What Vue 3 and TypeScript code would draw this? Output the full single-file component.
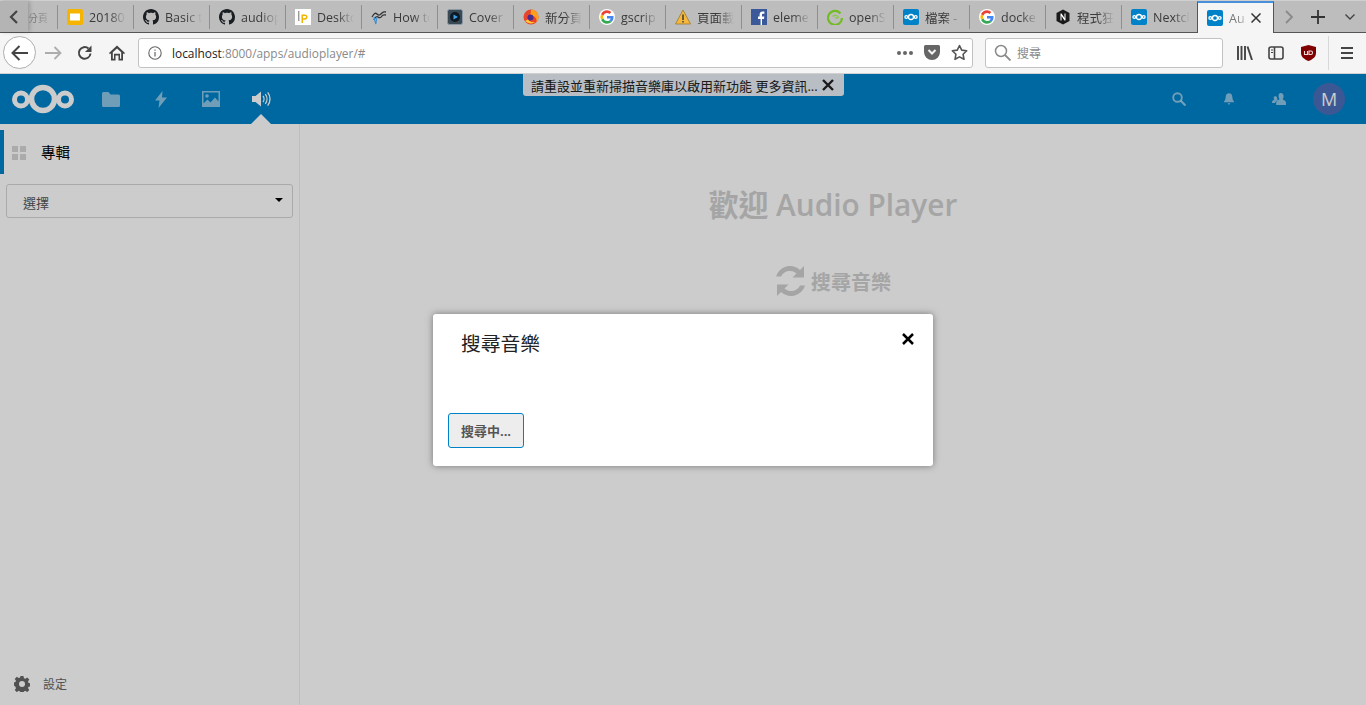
<script setup lang="ts">
interface Tab { icon: string; label: string }
const tabs: Tab[] = [
  { icon: 'slides', label: '20180' },
  { icon: 'github', label: 'Basic t' },
  { icon: 'github', label: 'audiop' },
  { icon: 'lp', label: 'Deskto' },
  { icon: 'wave', label: 'How to' },
  { icon: 'cover', label: 'Cover' },
  { icon: 'firefox', label: '新分頁' },
  { icon: 'google', label: 'gscrip' },
  { icon: 'warn', label: '頁面載' },
  { icon: 'fb', label: 'eleme' },
  { icon: 'suse', label: 'openS' },
  { icon: 'nc', label: '檔案 -' },
  { icon: 'google', label: 'docke' },
  { icon: 'n', label: '程式狂' },
  { icon: 'nc', label: 'Nextcl' },
]
</script>

<template>
  <div class="window">
    <div class="tabstrip">
      <div class="scroll-left">
        <svg width="12" height="16" viewBox="0 0 12 16"><path d="M9 2 3 8l6 6" fill="none" stroke="#444" stroke-width="2.2" /></svg>
      </div>
      <div class="first-tab"><span class="first-label">分頁</span></div>
      <div v-for="(t, i) in tabs" :key="i" class="tab">
        <svg class="fav" width="16" height="16" viewBox="0 0 16 16">
          <template v-if="t.icon === 'slides'">
            <rect width="16" height="16" rx="2" fill="#f4b400" /><rect x="3" y="4.5" width="10" height="7" fill="#fff" />
          </template>
          <template v-else-if="t.icon === 'github'">
            <path fill="#1b1f23" d="M8 0C3.58 0 0 3.58 0 8c0 3.54 2.29 6.53 5.47 7.59.4.07.55-.17.55-.38 0-.19-.01-.82-.01-1.49-2.01.37-2.53-.49-2.69-.94-.09-.23-.48-.94-.82-1.13-.28-.15-.68-.52-.01-.53.63-.01 1.08.58 1.23.82.72 1.21 1.87.87 2.33.66.07-.52.28-.87.51-1.07-1.78-.2-3.64-.89-3.64-3.95 0-.87.31-1.59.82-2.15-.08-.2-.36-1.02.08-2.12 0 0 .67-.21 2.2.82.64-.18 1.32-.27 2-.27s1.36.09 2 .27c1.53-1.04 2.2-.82 2.2-.82.44 1.1.16 1.92.08 2.12.51.56.82 1.27.82 2.15 0 3.07-1.87 3.75-3.65 3.95.29.25.54.73.54 1.48 0 1.07-.01 1.93-.01 2.2 0 .21.15.46.55.38A8.01 8.01 0 0 0 16 8c0-4.42-3.58-8-8-8z" />
          </template>
          <template v-else-if="t.icon === 'lp'">
            <rect width="16" height="16" fill="#fff" /><path d="M3 2h1.4v10H3z" fill="#999" /><path d="M6.5 5.500h3.200c1.700 0 2.800 1 2.800 2.600s-1.100 2.600-2.800 2.600H8V14H6.500zM8 7v2.300h1.600c.9 0 1.400-.4 1.400-1.200S10.500 7 9.600 7z" fill="#f0b400" />
          </template>
          <template v-else-if="t.icon === 'wave'">
            <path d="M1 8c2-3 3-5 5-3s3 1 5-1 3-1 4-1M3 11c1-3 3-4 4-3s3 1 4-1 3-1 4-1" fill="none" stroke="#333" stroke-width="1.300" /><path d="M3 8l1.800 7 1.200-7" fill="none" stroke="#3a8fd0" stroke-width="1.100" />
          </template>
          <template v-else-if="t.icon === 'cover'">
            <rect x=".5" y=".5" width="15" height="15" rx="2" fill="#3a4a55" stroke="#8a99a5" /><circle cx="8" cy="8" r="5" fill="#0d1a24" /><path d="M6.500 5.500 11 8l-4.500 2.500z" fill="#3aa0e8" />
          </template>
          <template v-else-if="t.icon === 'firefox'">
            <circle cx="8" cy="8" r="7.500" fill="#e8452c" /><path d="M8 .5a7.500 7.500 0 0 1 7.500 7.500c0 2-1 4-2 5 .5-3-1-5-3-6-.5 1.500-3 1-3-1 0-2 .5-4 .5-5.500z" fill="#ff9f1c" /><circle cx="7.500" cy="8.500" r="3" fill="#4a2c8f" /><path d="M2 12c3 3 8 3 10.500 1-3 .5-6 0-7.500-2.500z" fill="#ffcc33" />
          </template>
          <template v-else-if="t.icon === 'google'">
            <circle cx="8" cy="8" r="8" fill="#fff" />
            <path fill="#4285f4" d="M14.500 8.200c0-.5 0-.9-.1-1.300H8v2.500h3.700c-.2.800-.6 1.500-1.400 2l2.100 1.600c1.300-1.100 2.100-2.800 2.100-4.800z" />
            <path fill="#34a853" d="M8 14.700c1.800 0 3.300-.6 4.400-1.700l-2.100-1.600c-.6.400-1.400.7-2.300.7-1.700 0-3.200-1.200-3.700-2.800l-2.200 1.700c1.100 2.200 3.300 3.700 5.900 3.700z" />
            <path fill="#fbbc05" d="M4.300 9.300a4 4 0 0 1 0-2.600L2.100 5a6.700 6.700 0 0 0 0 6z" />
            <path fill="#ea4335" d="M8 3.900c1 0 1.800.3 2.500 1l1.900-1.900A6.500 6.500 0 0 0 8 1.300C5.400 1.300 3.200 2.800 2.100 5l2.200 1.700C4.800 5.100 6.300 3.900 8 3.900z" />
          </template>
          <template v-else-if="t.icon === 'warn'">
            <path d="M8 1 .5 15h15z" fill="#f5b83d" stroke="#9c7a30" stroke-width=".8" /><path d="M7.300 5.500h1.400v5.500H7.300zM7.300 12h1.400v1.500H7.300z" fill="#333" />
          </template>
          <template v-else-if="t.icon === 'fb'">
            <rect width="16" height="16" fill="#3b5998" /><path d="M11 16v-6h2l.3-2.500H11V6c0-.7.2-1.200 1.200-1.200h1.200V2.600c-.2 0-.9-.1-1.800-.1-1.800 0-3 1.100-3 3.100v1.900H7V10h2.600v6z" fill="#fff" />
          </template>
          <template v-else-if="t.icon === 'suse'">
            <path d="M13.500 4.500A7 7 0 1 0 15 9" fill="none" stroke="#73ba25" stroke-width="2.200" /><path d="M5.500 7.500c2-2 5.500-1.500 6 1-1.500 1-3 .5-3.500-.5" fill="none" stroke="#8fc84a" stroke-width="1.300" />
          </template>
          <template v-else-if="t.icon === 'nc'">
            <rect width="16" height="16" rx="2" fill="#0082c9" /><g fill="none" stroke="#fff" stroke-width="1.300"><circle cx="8" cy="8" r="2.500" /><circle cx="3.300" cy="8" r="1.400" /><circle cx="12.700" cy="8" r="1.400" /></g>
          </template>
          <template v-else>
            <path d="M8 .5 14.500 4v8L8 15.500 1.500 12V4z" fill="#1a1a1a" /><path d="M5.500 11.500v-7h1l3 4.500V4.500h1v7h-1l-3-4.500v4.500z" fill="#fff" />
          </template>
        </svg>
        <span class="tab-label">{{ t.label }}</span>
      </div>
      <div class="tab active">
        <svg class="fav" width="16" height="16" viewBox="0 0 16 16">
          <rect width="16" height="16" rx="2" fill="#0082c9" /><g fill="none" stroke="#fff" stroke-width="1.300"><circle cx="8" cy="8" r="2.500" /><circle cx="3.300" cy="8" r="1.400" /><circle cx="12.700" cy="8" r="1.400" /></g>
        </svg>
        <span class="active-label">Au</span>
        <svg class="tab-close" width="10" height="10" viewBox="0 0 10 10"><path d="M.5.500l9 9M9.500.500l-9 9" stroke="#333" stroke-width="1.500" /></svg>
      </div>
      <div class="strip-tools">
        <svg width="10" height="14" viewBox="0 0 10 14"><path d="M2 1l6 6-6 6" fill="none" stroke="#8a8a8a" stroke-width="1.800" /></svg>
        <svg class="plus" width="14" height="14" viewBox="0 0 14 14"><path d="M7 0v14M0 7h14" stroke="#333" stroke-width="1.800" /></svg>
        <svg class="chev" width="10" height="6" viewBox="0 0 10 6"><path d="M.5.500 5 5 9.500.500" fill="none" stroke="#444" stroke-width="1.400" /></svg>
      </div>
    </div>

    <div class="navbar">
      <div class="back">
        <svg width="18" height="16" viewBox="0 0 18 16"><path d="M17 8H2M8.500 1 1.500 8l7 7" fill="none" stroke="#444" stroke-width="2" /></svg>
      </div>
      <svg class="fwd" width="17" height="14" viewBox="0 0 17 14"><path d="M0 7h15M9.500 1l6 6-6 6" fill="none" stroke="#adadad" stroke-width="1.800" /></svg>
      <svg class="reload" width="16" height="16" viewBox="0 0 16 16"><path d="M13.500 8.500A5.800 5.800 0 1 1 11.500 3.500" fill="none" stroke="#444" stroke-width="2" /><path d="M14.500.5v6.500H8z" fill="#444" /></svg>
      <svg class="home" width="16" height="16" viewBox="0 0 16 16"><path d="M8 .5 0 8l1 1.200L2 8.300V15.500h4.500v-5h3v5H14V8.300l1 .900L16 8z" fill="#444" /><path d="M8 3.500 3.800 7.300v6.500h1.200v-5h6v5h1.200V7.300z" fill="#f5f5f5" /></svg>
      <div class="urlbar">
        <svg class="info" width="14" height="14" viewBox="0 0 14 14"><circle cx="7" cy="7" r="6.200" fill="none" stroke="#666" stroke-width="1.100" /><path d="M6.400 6h1.200v4.500H6.400zM6.400 3.400h1.200v1.300H6.400z" fill="#666" /></svg>
        <span class="url"><span class="host">localhost</span>:8000/apps/audioplayer/#</span>
        <span class="dots"><i></i><i></i><i></i></span>
        <svg class="pocket" width="16" height="15" viewBox="0 0 16 15"><path d="M1.500 0h13A1.500 1.500 0 0 1 16 1.500V7A8 8 0 0 1 0 7V1.500A1.500 1.500 0 0 1 1.500 0z" fill="#666" /><path d="M4.500 5 8 8.500 11.500 5" fill="none" stroke="#f5f5f5" stroke-width="2" /></svg>
        <svg class="star" width="17" height="17" viewBox="0 0 17 17"><path d="m8.500 1.500 2.200 4.600 5 .7-3.600 3.500.9 5-4.500-2.400L4 15.300l.9-5L1.300 6.800l5-.7z" fill="none" stroke="#555" stroke-width="1.600" stroke-linejoin="round" /></svg>
      </div>
      <div class="searchbar">
        <svg width="17" height="17" viewBox="0 0 17 17"><circle cx="7" cy="7" r="5.500" fill="none" stroke="#8a8a8a" stroke-width="1.500" /><path d="m11 11 5.500 5.500" stroke="#8a8a8a" stroke-width="1.800" /></svg>
        <span>搜尋</span>
      </div>
      <div class="tools">
        <svg width="16" height="14" viewBox="0 0 16 14"><path d="M1 0v14M4.500 0v14M8 0v14M10.500.5l4.500 13.500" stroke="#444" stroke-width="1.900" fill="none" /></svg>
        <svg class="panel" width="16" height="14" viewBox="0 0 16 14"><rect x="1" y="1" width="14" height="12" rx="2" fill="none" stroke="#444" stroke-width="1.600" /><path d="M6.500 1v12" stroke="#444" stroke-width="1.600" /><path d="M3 4h2M3 6.500h2" stroke="#444" /></svg>
        <svg class="ublock" width="15" height="16" viewBox="0 0 15 16"><path d="M7.500 0 15 2v6c0 4-3.500 6.500-7.500 8C3.500 14.500 0 12 0 8V2z" fill="#800000" /><path d="M3.500 6v3.500h3V6M8 6v3.500h2c2 0 2-3.500 0-3.500z" fill="none" stroke="#e8d8d8" stroke-width="1.100" /></svg>
        <span class="tool-sep"></span>
        <svg width="12" height="12" viewBox="0 0 12 12"><path d="M0 1h12M0 6h12M0 11h12" stroke="#444" stroke-width="1.800" /></svg>
      </div>
    </div>

    <div class="page">
      <header class="nc-header">
        <svg class="logo" width="62" height="30" viewBox="0 0 62 30">
          <g fill="none" stroke="#fff">
            <circle cx="31" cy="15" r="11.500" stroke-width="5.500" />
            <circle cx="9" cy="15.500" r="6.500" stroke-width="5" />
            <circle cx="53" cy="15.500" r="6.500" stroke-width="5" />
          </g>
        </svg>
        <nav class="apps">
          <div class="app">
            <svg width="18" height="15" viewBox="0 0 18 15"><path d="M0 1.500A1.500 1.500 0 0 1 1.500 0h5l2 2.500h8A1.500 1.500 0 0 1 18 4v9.500a1.500 1.500 0 0 1-1.500 1.500h-15A1.500 1.500 0 0 1 0 13.500z" fill="#fff" opacity=".55" /></svg>
          </div>
          <div class="app">
            <svg width="12" height="17" viewBox="0 0 12 17"><path d="M7.500 0 0 9.500h4.500L3.500 17 12 6.500H7z" fill="#fff" opacity=".55" /></svg>
          </div>
          <div class="app">
            <svg width="18" height="16" viewBox="0 0 18 16"><path fill-rule="evenodd" d="M0 0h18v16H0zM1.500 1.500v11l4-4 3 3 4.500-5 3.500 4v-9z" fill="#fff" opacity=".55" /><circle cx="5" cy="5" r="1.800" fill="#fff" opacity=".55" /></svg>
          </div>
          <div class="app current">
            <svg width="19" height="16" viewBox="0 0 19 16"><path d="M0 5h3.500L9 .5v15L3.500 11H0z" fill="#fff" /><g fill="none" stroke="#fff" stroke-width="1.300"><path d="M11 5c1.300 1.600 1.300 4.400 0 6" /><path d="M13.300 3.200c2.200 2.800 2.200 6.800 0 9.600" /><path d="M15.700 1.400c3.100 3.900 3.100 9.300 0 13.200" /></g></svg>
          </div>
        </nav>
        <div class="notify">
          <span>請重設並重新掃描音樂庫以啟用新功能 更多資訊...</span>
          <svg width="12" height="12" viewBox="0 0 12 12"><path d="M1 1l10 10M11 1 1 11" stroke="#222" stroke-width="2.400" /></svg>
        </div>
        <div class="right">
          <svg width="14" height="14" viewBox="0 0 14 14"><circle cx="5.500" cy="5.500" r="4.300" fill="none" stroke="#fff" stroke-width="1.900" opacity=".55" /><path d="m8.700 8.700 4.800 4.800" stroke="#fff" stroke-width="2.200" opacity=".55" /></svg>
          <svg width="10" height="12" viewBox="0 0 12 14"><path d="M6 0c2.500 0 4 2 4 4.500 0 3 1 4 2 5.500v1H0v-1c1-1.500 2-2.500 2-5.500C2 2 3.500 0 6 0zM4.500 12h3a1.500 1.500 0 0 1-3 0z" fill="#fff" opacity=".55" /></svg>
          <svg width="14" height="13" viewBox="0 0 15 14"><path d="M9.500 0c2 0 3 1.600 3 3.500 0 1.200-.5 2.300-1 3 0 1 3.500 1.500 3.500 4V13H4.500v-2.500c0-2.500 3.500-3 3.500-4-.5-.7-1-1.800-1-3C7 1.600 7.500 0 9.500 0zM3.500 3.500c1 0 1.700.6 2 1.500-.1 1 .3 2 .6 2.800-1.500.7-2.600 1.500-2.600 3H0V9.500C0 8 2.500 7.500 2.500 7 2 6.500 1.700 5.800 1.700 5.200c0-1 .8-1.700 1.800-1.700z" fill="#fff" opacity=".55" /></svg>
          <div class="avatar">M</div>
        </div>
      </header>

      <div class="body">
        <aside class="sidebar">
          <div class="album-row">
            <svg width="14" height="14" viewBox="0 0 14 14"><path d="M0 0h6v6H0zM8 0h6v6H8zM0 8h6v6H0zM8 8h6v6H8z" fill="#d6d6d6" /></svg>
            <span>專輯</span>
          </div>
          <div class="select">
            <span>選擇</span>
            <i class="caret"></i>
          </div>
          <div class="settings">
            <svg width="16" height="16" viewBox="0 0 16 16"><path fill-rule="evenodd" d="M6.500 0h3l.4 2.200 1.400.6L13.200 1.500l2.100 2.100-1.300 1.900.6 1.400 2.200.4v3l-2.200.4-.6 1.400 1.300 1.900-2.100 2.100-1.900-1.300-1.400.6-.4 2.200h-3l-.4-2.200-1.400-.6-1.900 1.300L.700 14.100 2 12.200l-.6-1.400L0 9.500v-3l1.400-.4.600-1.400L.7 2.900 2.800.8l1.900 1.300 1.400-.6zM8 5a3 3 0 1 0 0 6 3 3 0 0 0 0-6z" fill="#666" /></svg>
            <span>設定</span>
          </div>
        </aside>
        <main class="welcome">
          <h1>歡迎 Audio Player</h1>
          <div class="rescan">
            <svg width="31" height="30" viewBox="0 0 31 30"><path d="M29 0v11.500H17.500l4-4A9.800 9.800 0 0 0 6 10.500H1A14.500 14.500 0 0 1 25 4z" fill="#cfcfcf" /><path d="M2 30V18.500h11.500l-4 4A9.800 9.800 0 0 0 25 19.500h5A14.500 14.500 0 0 1 6 26z" fill="#cfcfcf" /></svg>
            <span>搜尋音樂</span>
          </div>
        </main>
      </div>

      <div class="backdrop">
        <div class="dialog">
          <div class="dialog-title">搜尋音樂</div>
          <svg class="dialog-close" width="12" height="12" viewBox="0 0 12 12"><path d="M1 1l10 10M11 1 1 11" stroke="#000" stroke-width="2.500" /></svg>
          <button class="searching">搜尋中...</button>
        </div>
      </div>
    </div>
  </div>
</template>

<style>
html, body { margin: 0; height: 100%; overflow: hidden; }
</style>

<style scoped>
.window {
  width: 1366px;
  height: 705px;
  display: flex;
  flex-direction: column;
  font-family: "Open Sans", "Noto Sans CJK TC", sans-serif;
  background: #f5f5f5;
}
.tabstrip {
  height: 33px;
  box-sizing: border-box;
  display: flex;
  background: #bdbdbd;
  border-top: 1px solid #cfcfcf;
  border-bottom: 1px solid #555;
  flex: none;
}
.scroll-left {
  width: 28px;
  display: flex;
  align-items: center;
  justify-content: center;
  background: #b4b4b4;
  box-shadow: 2px 0 4px rgba(0, 0, 0, .18);
  flex: none;
  position: relative;
}
.first-tab {
  width: 30px;
  box-sizing: border-box;
  border-right: 1px solid #8f8f8f;
  margin: 4px 0 3px;
  display: flex;
  align-items: center;
  flex: none;
}
.first-label {
  font-size: 10px;
  color: #777;
  white-space: nowrap;
  -webkit-mask-image: linear-gradient(90deg, rgba(0,0,0,.6), #000 35%, rgba(0,0,0,.35));
  mask-image: linear-gradient(90deg, rgba(0,0,0,.6), #000 35%, rgba(0,0,0,.35));
}
.tab {
  width: 76px;
  box-sizing: border-box;
  margin: 4px 0 3px;
  padding-left: 9px;
  border-right: 1px solid #8f8f8f;
  display: flex;
  align-items: center;
  gap: 6px;
  flex: none;
}
.fav { flex: none; }
.tab-label {
  font-size: 12.500px;
  color: #3a3a3a;
  white-space: nowrap;
  -webkit-mask-image: linear-gradient(90deg, #000 20px, transparent 37px);
  mask-image: linear-gradient(90deg, #000 20px, transparent 37px);
}
.tab.active {
  width: 77px;
  margin: 0 0 -1px -1px;
  height: 32px;
  background: #f5f5f5;
  border-top: 2px solid #4a90d9;
  border-left: 1px solid #555;
  border-right: 1px solid #555;
  padding-left: 9px;
}
.active-label {
  width: 16px;
  flex: none;
  font-size: 12.500px;
  color: #777;
  white-space: nowrap;
  -webkit-mask-image: linear-gradient(90deg, #000 8px, rgba(0,0,0,.35) 16px);
  mask-image: linear-gradient(90deg, #000 8px, rgba(0,0,0,.35) 16px);
}
.strip-tools {
  flex: 1;
  display: flex;
  align-items: center;
  padding-left: 10px;
}
.plus { margin-left: 17px; }
.chev { margin-left: 20px; }

.navbar {
  height: 41px;
  box-sizing: border-box;
  flex: none;
  display: flex;
  align-items: center;
  padding: 0 0 1px 3px;
  background: #f5f5f5;
  border-bottom: 1px solid #d0d0d0;
}
.back {
  width: 33px;
  height: 33px;
  box-sizing: border-box;
  border-radius: 50%;
  border: 1px solid #aeaeae;
  background: #fff;
  display: flex;
  align-items: center;
  justify-content: center;
  flex: none;
}
.fwd { margin-left: 9px; flex: none; }
.reload { margin-left: 15px; flex: none; }
.home { margin-left: 16px; flex: none; }
.urlbar {
  margin-left: 13px;
  width: 835px;
  height: 30px;
  box-sizing: border-box;
  background: #fff;
  border: 1px solid #c2c2c2;
  border-radius: 3px;
  display: flex;
  align-items: center;
  padding: 0 4px 0 9px;
  flex: none;
}
.url { margin-left: 10px; font-size: 11.900px; color: #8a8a8a; flex: 1; }
.host { color: #222; }
.dots { display: flex; gap: 2px; margin-right: 11px; }
.dots i { width: 4px; height: 4px; border-radius: 50%; background: #666; display: block; }
.star { margin-left: 11px; }
.searchbar {
  margin-left: 12px;
  width: 238px;
  height: 30px;
  box-sizing: border-box;
  background: #fff;
  border: 1px solid #c2c2c2;
  border-radius: 3px;
  display: flex;
  align-items: center;
  gap: 6px;
  padding-left: 8px;
  font-size: 12px;
  color: #8a8a8a;
  flex: none;
}
.tools {
  flex: 1;
  display: flex;
  align-items: center;
  padding-left: 14px;
  gap: 16px;
}
.panel { margin-left: -1px; }
.ublock { margin-left: 1px; }
.tool-sep { width: 1px; height: 34px; background: #d8d8d8; margin: 0 -4px 0 -4px; }

.page {
  flex: 1;
  position: relative;
  display: flex;
  flex-direction: column;
  background: #fff;
  overflow: hidden;
}
.nc-header {
  height: 50px;
  flex: none;
  background: #0082c9;
  display: flex;
  align-items: center;
  position: relative;
}
.logo { margin-left: 12px; flex: none; }
.apps { display: flex; margin-left: 12px; height: 50px; }
.app {
  width: 50px;
  display: flex;
  align-items: center;
  justify-content: center;
  position: relative;
}
.app.current::after {
  content: "";
  position: absolute;
  bottom: 0;
  left: 50%;
  margin-left: -10px;
  border: 10px solid transparent;
  border-top: 0;
  border-bottom-color: #fff;
}
.notify {
  position: absolute;
  top: 0;
  left: 523px;
  width: 321px;
  height: 22px;
  box-sizing: border-box;
  background: #e6eef5;
  border-radius: 0 0 3px 3px;
  display: flex;
  align-items: center;
  gap: 4px;
  padding-left: 8px;
  font-size: 13px;
  color: #222;
  white-space: nowrap;
}
.right {
  margin-left: auto;
  display: flex;
  align-items: center;
  gap: 38px;
  padding-right: 21px;
}
.avatar {
  width: 32px;
  height: 32px;
  border-radius: 50%;
  background: #4a6fba;
  color: #fff;
  display: flex;
  align-items: center;
  justify-content: center;
  font-size: 18px;
  margin-left: -11px;
}

.body { flex: 1; display: flex; min-height: 0; }
.sidebar {
  width: 300px;
  box-sizing: border-box;
  border-right: 1px solid #eee;
  display: flex;
  flex-direction: column;
  padding-top: 6px;
  flex: none;
}
.album-row {
  height: 44px;
  box-sizing: border-box;
  border-left: 4px solid #0082c9;
  display: flex;
  align-items: center;
  padding: 0 0 2px 8px;
  gap: 15px;
  font-size: 14.500px;
  font-weight: 400;
  color: #000;
}
.album-row svg { margin-top: 3px; }
.select {
  margin: 10px 6px 0;
  height: 34px;
  box-sizing: border-box;
  border: 1px solid #d5d5d5;
  border-radius: 3px;
  display: flex;
  align-items: center;
  justify-content: space-between;
  padding: 0 9px 0 16px;
  font-size: 13px;
  color: #555;
  background: #fff;
}
.select span { margin-top: 3px; }
.caret {
  border: 4px solid transparent;
  border-top: 4px solid #000;
  border-bottom: 0;
  margin-top: -3px;
}
.settings {
  margin-top: auto;
  height: 42px;
  display: flex;
  align-items: center;
  gap: 13px;
  padding-left: 14px;
  font-size: 12px;
  color: #666;
}
.welcome {
  flex: 1;
  display: flex;
  flex-direction: column;
  align-items: center;
  padding-top: 60px;
}
.welcome h1 {
  margin: 0;
  font-size: 29.800px;
  line-height: 42px;
  font-weight: 600;
  color: #cfcfcf;
}
.rescan {
  margin-top: 40px;
  display: flex;
  align-items: center;
  gap: 5px;
  font-size: 20px;
  font-weight: 700;
  color: #cfcfcf;
}
.backdrop {
  position: absolute;
  inset: 0;
  background: rgba(0, 0, 0, .2);
}
.dialog {
  position: absolute;
  left: 433px;
  top: 240px;
  width: 500px;
  height: 152px;
  background: #fff;
  border-radius: 3px;
  box-shadow: 0 0 7px #777;
}
.dialog-title {
  padding: 15px 0 0 28px;
  font-size: 19.800px;
  line-height: 30px;
  color: #222;
}
.dialog-close { position: absolute; top: 19px; right: 19px; }
.searching {
  position: absolute;
  left: 15px;
  top: 99px;
  width: 76px;
  height: 35px;
  box-sizing: border-box;
  background: #ededed;
  border: 1px solid #0082c9;
  border-radius: 3px;
  font-family: inherit;
  font-size: 13px;
  font-weight: 700;
  color: #555;
  padding: 0;
}
</style>
